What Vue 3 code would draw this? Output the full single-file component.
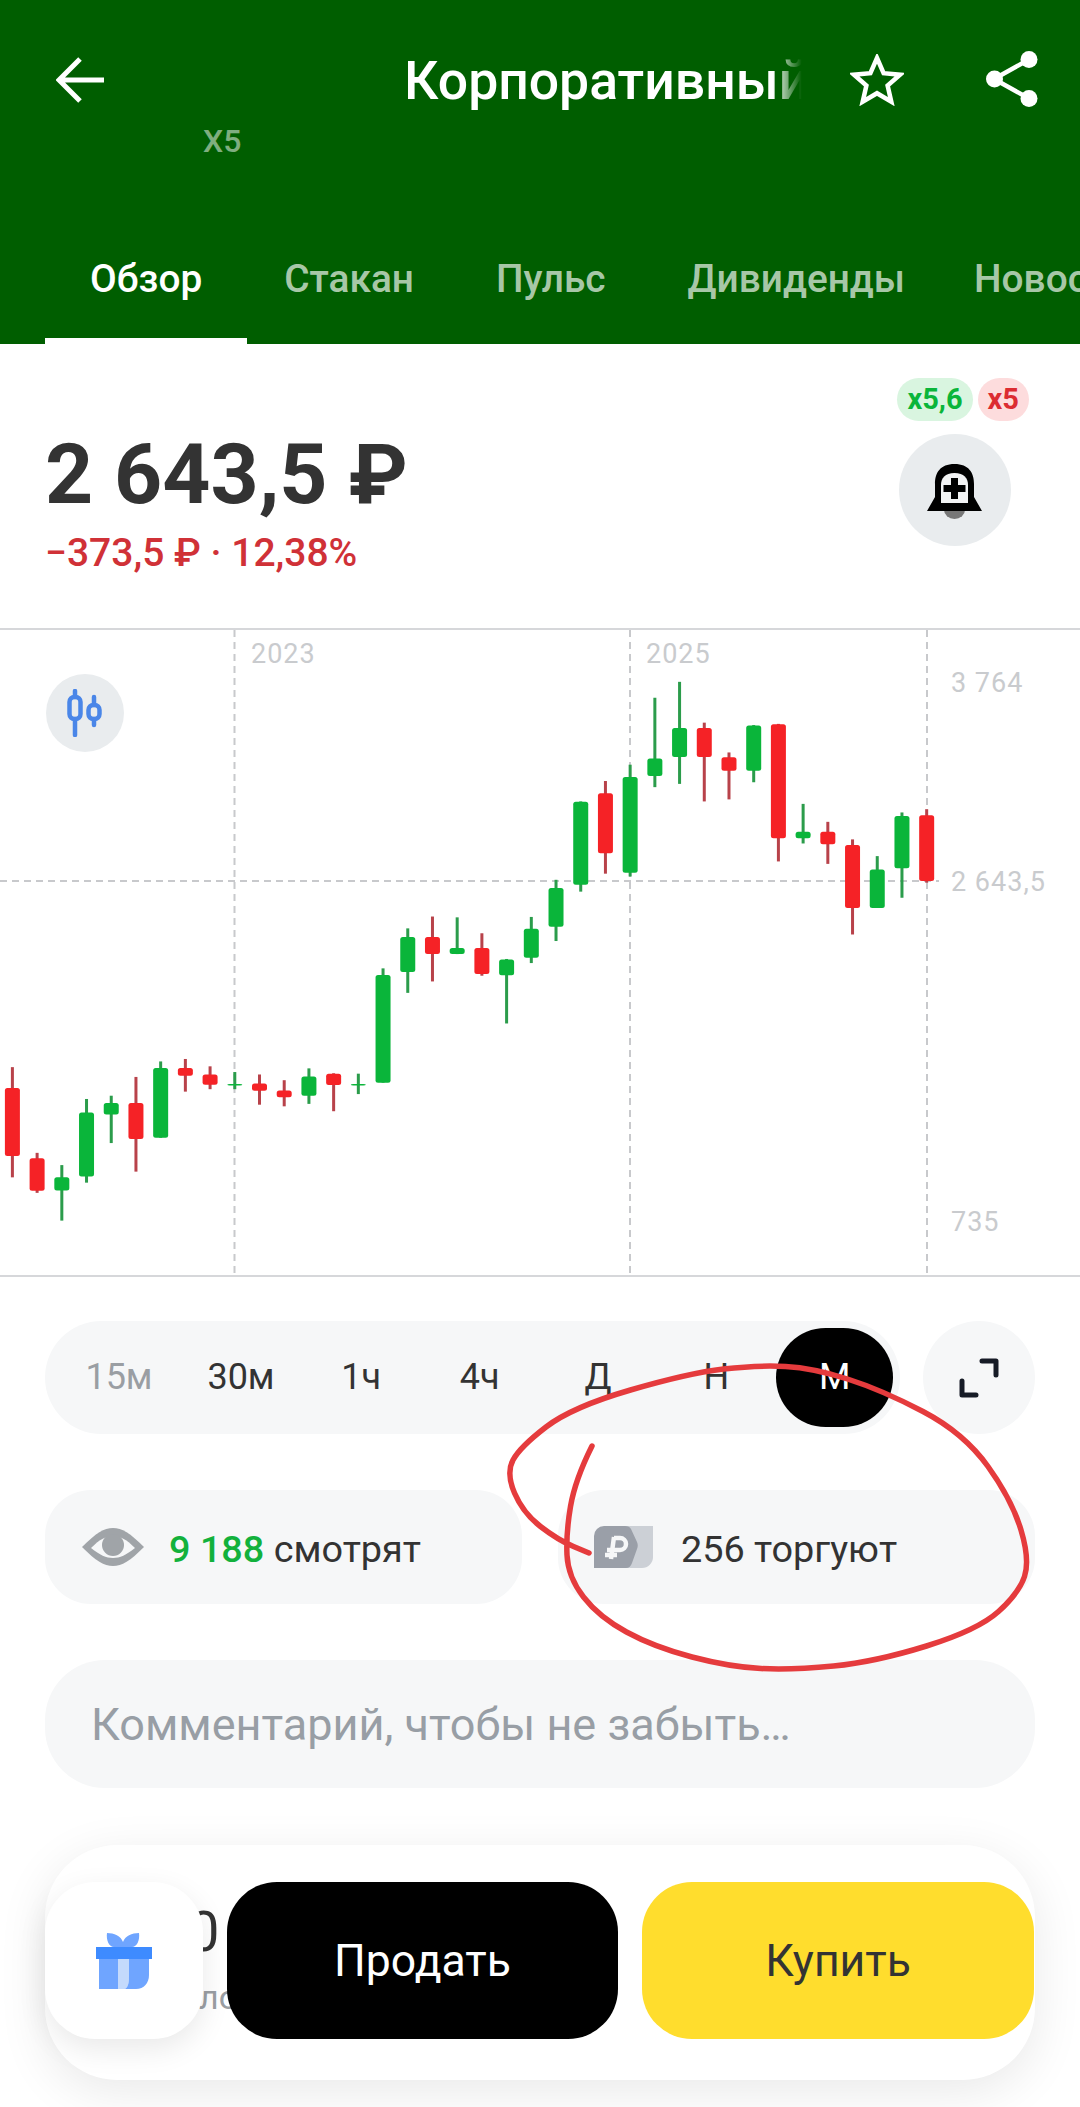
<template>
  <div class="page">
    <header class="header">
      <div class="top-row">
        <svg class="back" viewBox="0 0 48 46" width="48" height="46">
          <path d="M24 2 3 23l21 21M3 23h45" fill="none" stroke="#fff" stroke-width="5" />
        </svg>
        <div class="title"><span>Корпоративный центр</span></div>
        <svg class="star" viewBox="0 0 54 52" width="54" height="52">
          <path d="M27 4l6.6 15.2 16.4 1.5-12.4 10.9 3.7 16.1L27 39.2 12.7 47.700l3.7-16.1L4 20.7l16.400-1.500z" fill="none" stroke="#fff" stroke-width="4.5" stroke-linejoin="miter" />
        </svg>
        <svg class="share" viewBox="0 0 52 58" width="52" height="58">
          <path d="M43 9.5 8 29l35 19.5" fill="none" stroke="#fff" stroke-width="4.5" />
          <circle cx="43" cy="9.5" r="8.5" fill="#fff" />
          <circle cx="8.5" cy="29" r="8.5" fill="#fff" />
          <circle cx="43" cy="48.5" r="8.5" fill="#fff" />
        </svg>
      </div>
      <div class="ticker">X5</div>
      <nav class="tabs">
        <div v-for="(tab, i) in tabs" :key="tab" class="tab" :class="{ 'is-active': i === 0 }">{{ tab }}</div>
      </nav>
    </header>

    <section class="quote">
      <div class="quote-main">
        <div class="price">2 643,5 ₽</div>
        <div class="change">−373,5 ₽ · 12,38%</div>
      </div>
      <div class="quote-side">
        <div class="chips">
          <span class="chip chip--green">x5,6</span>
          <span class="chip chip--red">x5</span>
        </div>
        <div class="bell">
          <svg viewBox="0 0 55 56" width="55" height="56">
            <path d="M17 46h21a10.5 9 0 0 1-21 0z" fill="#777" />
            <path d="M27.5 0C13 0 8 9 8 20v13L0 47h55l-8-14V20C47 9 42 0 27.5 0z" fill="#000" />
            <path d="M27.5 9C18 9 14 14 14 21v18h27V21c0-7-4-12-13.5-12z" fill="#f2f3f4" />
            <path d="M24 14h7v7h7.5v7H31v7h-7v-7h-7.5v-7H24z" fill="#000" />
          </svg>
        </div>
      </div>
    </section>

    <section class="chart">
      <svg class="chart-svg" viewBox="0 0 1080 647" width="1080" height="647">
        <g stroke="#c8c9cc" stroke-width="2" stroke-dasharray="7 5">
          <line x1="234.5" y1="0" x2="234.5" y2="647" />
          <line x1="630" y1="0" x2="630" y2="647" />
          <line x1="927" y1="0" x2="927" y2="647" />
          <line x1="0" y1="251" x2="939" y2="251" />
        </g>
        <g v-for="c in candles" :key="c.x">
          <rect :x="c.x - 1.5" :y="c.high" width="3" :height="c.low - c.high" :fill="c.wick" />
          <rect :x="c.x - 7.5" :y="c.top" width="15" :height="Math.max(c.bottom - c.top, 1.5)" rx="2.5" :fill="c.body" />
        </g>
        <g class="axis">
          <text x="251" y="33">2023</text>
          <text x="646" y="33">2025</text>
          <text x="951" y="62">3 764</text>
          <text x="951" y="261">2 643,5</text>
          <text x="951" y="601">735</text>
        </g>
      </svg>
      <button class="mode">
        <svg viewBox="0 0 36 48" width="36" height="48">
          <g fill="none" stroke="#4a86e8" stroke-width="4.5" stroke-linecap="round">
            <path d="M8 2v6M8 30v16M27 8v8M27 30v6" />
            <rect x="2.5" y="8" width="11" height="22" rx="5" />
            <rect x="21.5" y="16" width="11" height="14" rx="5" />
          </g>
        </svg>
      </button>
    </section>

    <section class="periods">
      <div class="period-bar">
        <div v-for="p in periods" :key="p" class="period" :class="{ 'is-muted': p === '15м', 'is-active': p === 'М' }">
          <span>{{ p }}</span>
        </div>
      </div>
      <button class="expand">
        <svg viewBox="0 0 40 40" width="40" height="40">
          <path d="M23 3h14v14M3 23v14h14" fill="none" stroke="#161b26" stroke-width="5" stroke-linejoin="round" stroke-linecap="round" />
        </svg>
      </button>
    </section>

    <section class="stats">
      <div class="stat stat--views">
        <svg viewBox="0 0 62 38" width="62" height="38">
          <path d="M0 19C14 5 22 0 31 0s17 5 31 19C48 33 40 38 31 38S14 33 0 19z" fill="#a0a4a8" />
          <path d="M9 20c9-9 15-12 22-12s13 3 22 12c-9 7-15 10-22 10S18 27 9 20z" fill="#f6f7f8" />
          <circle cx="31" cy="17" r="11" fill="#a0a4a8" />
        </svg>
        <span><b class="views">9 188</b> смотрят</span>
      </div>
      <div class="stat stat--traders">
        <svg viewBox="0 0 59 42" width="59" height="42">
          <path d="M20 0h39v31a11 11 0 0 1-11 11H20z" fill="#ccd0d6" />
          <path d="M10 0h21c3 0 5 1 6 3l6 13c1 2 1 5 0 7l-5 14c-1 3-3 5-6 5H0V10A10 10 0 0 1 10 0z" fill="#9a9fa8" />
          <path d="M20 11l-3 22M20 12h6a5.5 5.5 0 0 1 0 12H13M11 29h12" fill="none" stroke="#f6f7f8" stroke-width="4.5" />
        </svg>
        <span>256 торгуют</span>
      </div>
    </section>

    <div class="comment">Комментарий, чтобы не забыть…</div>

    <footer class="actions">
      <div class="peek">
        <span class="peek-top">0</span>
        <span class="peek-bottom">ло</span>
      </div>
      <button class="gift">
        <svg viewBox="0 0 56 56" width="56" height="56">
          <path d="M11 0c7 0 14 3 16 9 2-6 9-9 16-9 1 7-2 14-7 14H18C13 14 10 7 11 0z" fill="#6fa5ff" />
          <rect x="0" y="14" width="56" height="12" fill="#3e8bff" />
          <rect x="3" y="26" width="19" height="30" fill="#6fa5ff" />
          <path d="M22 26h11v18c0 6-1 10-4 12h-7z" fill="#c4dafc" />
          <path d="M33 26h20v16c0 8-5 14-13 14H29c3-2 4-6 4-12z" fill="#6fa5ff" />
        </svg>
      </button>
      <button class="trade trade--sell">Продать</button>
      <button class="trade trade--buy">Купить</button>
    </footer>

    <!-- hand-drawn marker annotation over the screenshot -->
    <svg class="scribble" viewBox="0 0 1080 2107" width="1080" height="2107">
      <path :d="scribblePath" fill="none" stroke="#e53b3d" stroke-width="5.5" stroke-linecap="round" stroke-linejoin="round" />
    </svg>
  </div>
</template>

<script setup>
const tabs = ['Обзор', 'Стакан', 'Пульс', 'Дивиденды', 'Новости']
const periods = ['15м', '30м', '1ч', '4ч', 'Д', 'Н', 'М']

// [high, bodyTop, bodyBottom, low, isGreen], measured on a crop of the chart
const raw = [
  [1022, 1073, 1240, 1292, 0], [1232, 1245, 1325, 1330, 0], [1262, 1292, 1324, 1398, 1],
  [1100, 1133, 1290, 1305, 1], [1092, 1110, 1138, 1208, 1], [1046, 1110, 1198, 1278, 0],
  [1008, 1024, 1195, 1195, 1], [1002, 1024, 1043, 1082, 0], [1020, 1040, 1065, 1076, 0],
  [1034, 1063, 1064, 1076, 1], [1040, 1062, 1080, 1114, 0], [1054, 1079, 1096, 1118, 0],
  [1025, 1045, 1092, 1112, 1], [1037, 1038, 1066, 1130, 0], [1038, 1063, 1064, 1088, 1],
  [780, 796, 1060, 1060, 1], [682, 703, 789, 840, 1], [653, 703, 745, 812, 0],
  [655, 730, 745, 745, 1], [694, 730, 794, 798, 0], [757, 758, 797, 915, 1],
  [654, 683, 754, 767, 1], [563, 583, 678, 713, 1], [371, 372, 575, 592, 1],
  [321, 351, 498, 548, 0], [281, 311, 546, 555, 1], [117, 266, 309, 336, 1],
  [78, 191, 262, 328, 1], [178, 191, 262, 371, 0], [251, 263, 296, 366, 0],
  [184, 185, 296, 324, 1], [181, 182, 461, 518, 0], [377, 445, 461, 474, 1],
  [421, 445, 476, 524, 0], [464, 478, 632, 697, 0], [505, 538, 632, 632, 1],
  [398, 407, 535, 607, 1], [390, 405, 566, 570, 0],
]

const toY = (v) => 20 + v / 2.45
const candles = raw.map(([h, t, b, l, green], i) => ({
  x: 12.4 + i * 24.71,
  high: toY(h),
  top: toY(t),
  bottom: toY(b),
  low: toY(l),
  body: green ? '#0ab53a' : '#f52226',
  wick: green ? '#2b9c4b' : '#b8424a',
}))

const points = [
  [592, 1446], [575, 1480], [566, 1533], [568, 1577], [599, 1617], [654, 1647], [730, 1667],
  [792, 1670], [875, 1662], [978, 1630], [1019, 1593], [1030, 1560], [1012, 1500], [964, 1433],
  [882, 1390], [813, 1368], [758, 1365], [689, 1373], [572, 1407], [520, 1447], [506, 1473],
  [523, 1513], [558, 1540], [589, 1553],
]

// smooth the stroke through the midpoints
const scribblePath = points.reduce((d, p, i) => {
  if (i === 0) return `M${p[0]} ${p[1]}`
  if (i === points.length - 1) return `${d} L${p[0]} ${p[1]}`
  const next = points[i + 1]
  return `${d} Q${p[0]} ${p[1]} ${(p[0] + next[0]) / 2} ${(p[1] + next[1]) / 2}`
}, '')
</script>

<style>
html, body { background: #fff; }
</style>

<style scoped>
.page {
  position: relative;
  width: 1080px;
  height: 2107px;
  overflow: hidden;
  background: #fff;
  font-family: Roboto, "Noto Sans", sans-serif;
  color: #333;
}
button { border: 0; padding: 0; font: inherit; }

.header {
  height: 344px;
  background: #005e00;
  display: flex;
  flex-direction: column;
  color: #fff;
}
.top-row {
  display: flex;
  align-items: center;
  height: 80px;
  margin-top: 40px;
}
.back { margin-left: 56px; }
.title {
  width: 410px;
  margin-left: 300px;
  font-size: 53.5px;
  font-weight: 500;
  white-space: nowrap;
  overflow: hidden;
  -webkit-mask-image: linear-gradient(to right, #000 90%, transparent 97%);
  mask-image: linear-gradient(to right, #000 90%, transparent 97%);
}
.star { margin-left: 36px; }
.share { margin: -3px 0 0 82px; }
.ticker {
  margin: 2px 0 0 203px;
  font-size: 32px;
  font-weight: 500;
  color: rgba(255, 255, 255, 0.5);
}
.tabs {
  display: flex;
  margin-top: auto;
  padding-left: 49px;
  white-space: nowrap;
  overflow: hidden;
}
.tab {
  position: relative;
  padding: 0 41px 43px;
  font-size: 38.8px;
  line-height: 44px;
  color: rgba(255, 255, 255, 0.68);
  font-weight: 500;
}
.tab:last-child { margin-left: -13px; }
.tab.is-active { color: #fff; }
.tab.is-active::after {
  content: '';
  position: absolute;
  left: -4px;
  right: -4px;
  bottom: 0;
  height: 6px;
  background: #fff;
}

.quote {
  height: 284px;
  box-sizing: border-box;
  padding: 34px 45px 0;
  display: flex;
  justify-content: space-between;
}
.price {
  margin-top: 47px;
  font-size: 84px;
  line-height: 100px;
  font-weight: 700;
  color: #333;
}
.change {
  margin-top: 6px;
  font-size: 39px;
  line-height: 44px;
  color: #d03137;
  font-weight: 500;
}
.quote-side {
  display: flex;
  flex-direction: column;
  align-items: center;
  margin-right: 6px;
}
.chips {
  display: flex;
  gap: 5px;
}
.chip {
  height: 43px;
  line-height: 43px;
  padding: 0 10px;
  border-radius: 22px;
  font-size: 29px;
  font-weight: 700;
}
.chip--green { background: #d9f5e0; color: #0ab53a; }
.chip--red { background: #fddcdd; color: #dc2c32; }
.bell {
  width: 112px;
  height: 112px;
  margin: 13px 0 0 -17px;
  border-radius: 50%;
  background: #e9ecee;
  display: flex;
  align-items: center;
  justify-content: center;
}
.bell svg { margin-top: 3px; }

.chart {
  position: relative;
  height: 649px;
  border-top: 2px solid #d6d7da;
  border-bottom: 2px solid #d6d7da;
  box-sizing: border-box;
}
.chart-svg { display: block; }
.axis text {
  font-size: 27px;
  fill: #c9cbce;
  letter-spacing: 1px;
}
.mode {
  position: absolute;
  left: 46px;
  top: 44px;
  width: 78px;
  height: 78px;
  border-radius: 50%;
  background: #e9ecee;
  display: flex;
  align-items: center;
  justify-content: center;
}

.periods {
  display: flex;
  justify-content: space-between;
  margin: 44px 45px 0;
}
.period-bar {
  display: flex;
  align-items: center;
  height: 113px;
  width: 855px;
  box-sizing: border-box;
  padding-left: 13px;
  border-radius: 57px;
  background: #f6f7f8;
}
.period {
  width: 118.4px;
  display: flex;
  justify-content: center;
  font-size: 36px;
  color: #333;
}
.period:nth-child(-n+2) { width: 122px; }
.period span {
  width: 117px;
  height: 99px;
  line-height: 99px;
  text-align: center;
  border-radius: 50px;
}
.period.is-muted { color: #9a9ea3; }
.period.is-active span { background: #000; color: #fff; }
.expand {
  width: 112px;
  height: 113px;
  border-radius: 50%;
  background: #f6f7f8;
  display: flex;
  align-items: center;
  justify-content: center;
}

.stats {
  display: flex;
  justify-content: space-between;
  margin: 56px 45px 0;
}
.stat {
  height: 114px;
  width: 477px;
  box-sizing: border-box;
  border-radius: 46px;
  background: #f6f7f8;
  display: flex;
  align-items: center;
  font-size: 37.8px;
  color: #333;
}
.stat span { margin-top: 3px; }
.stat--views { padding-left: 37px; gap: 25px; }
.stat--traders { padding-left: 36px; gap: 28px; }
.views { color: #12b13c; font-weight: 500; }

.comment {
  height: 128px;
  margin: 56px 45px 0;
  padding-left: 46px;
  line-height: 130px;
  border-radius: 60px;
  background: #f6f7f8;
  font-size: 45px;
  color: #989ea5;
}

.actions {
  position: relative;
  display: flex;
  align-items: center;
  height: 231px;
  padding-bottom: 4px;
  margin: 57px 45px 0;
  border-radius: 72px;
  background: #fff;
  box-shadow: 0 12px 50px rgba(0, 0, 0, 0.09);
}
.peek { position: absolute; left: 0; top: 0; color: #333; }
.peek span { position: absolute; white-space: nowrap; }
.peek-top { left: 143px; top: 54px; font-size: 56px; }
.peek-bottom { left: 154px; top: 132px; font-size: 34px; color: #9a9ea3; }
.gift {
  position: relative;
  width: 158px;
  height: 157px;
  border-radius: 50px;
  background: #fff;
  box-shadow: 0 10px 30px rgba(0, 0, 0, 0.09);
  display: flex;
  align-items: center;
  justify-content: center;
}
.trade {
  position: relative;
  height: 157px;
  border-radius: 50px;
  font-size: 44.5px;
}
.trade--sell { width: 391px; margin-left: 24px; background: #000; color: #fff; }
.trade--buy { width: 392px; margin-left: 24px; background: #ffdd2d; color: #333; }

.scribble {
  position: absolute;
  left: 0;
  top: 0;
  pointer-events: none;
}
</style>
